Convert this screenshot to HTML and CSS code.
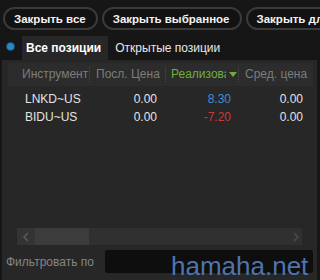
FILE: index.html
```html
<!DOCTYPE html>
<html lang="ru">
<head>
<meta charset="utf-8">
<link rel="stylesheet" href="styles.css">
</head>
<body>
<div class="toolbar">
  <button class="pill">Закрыть все</button>
  <button class="pill">Закрыть выбранное</button>
  <button class="pill">Закрыть для символа</button>
</div>
<div class="tabs">
  <span class="radio"></span>
  <span class="tab active">Все позиции</span>
  <span class="tab">Открытые позиции</span>
</div>
<div class="panel">
  <div class="grid">
    <div class="row head">
      <div class="c c1">Инструмент</div>
      <div class="c c2">Посл. Цена</div>
      <div class="c c3 sorted"><span class="trunc">Реализова</span><span class="tri"></span></div>
      <div class="c c4">Сред. цена</div>
    </div>
    <div class="row">
      <div class="c c1">LNKD~US</div>
      <div class="c c2 num">0.00</div>
      <div class="c c3 num pos">8.30</div>
      <div class="c c4 num">0.00</div>
    </div>
    <div class="row">
      <div class="c c1">BIDU~US</div>
      <div class="c c2 num">0.00</div>
      <div class="c c3 num neg">-7.20</div>
      <div class="c c4 num">0.00</div>
    </div>
  </div>
  <div class="hscroll">
    <span class="arrow"><svg width="8" height="10" viewBox="0 0 8 10"><path d="M6 1 L2 5 L6 9" fill="none" stroke="#5a5a5a" stroke-width="1.5"/></svg></span>
    <span class="thumb"></span>
    <span class="track"></span>
    <span class="arrow"><svg width="8" height="10" viewBox="0 0 8 10"><path d="M2 1 L6 5 L2 9" fill="none" stroke="#4a4a4a" stroke-width="1.5"/></svg></span>
  </div>
  <div class="filter">
    <span class="flabel">Фильтровать по</span>
    <span class="finput"></span>
  </div>
</div>
<div class="watermark">hamaha.net</div>
</body>
</html>
```
FILE: styles.css
```css
* { box-sizing: border-box; }
html, body { margin: 0; padding: 0; }
body {
  width: 320px;
  height: 280px;
  overflow: hidden;
  background: #161616;
  font-family: "Liberation Sans", Arial, sans-serif;
  position: relative;
}
.toolbar {
  display: flex;
  gap: 4px;
  padding: 7px 0 0 3px;
  white-space: nowrap;
  overflow: hidden;
}
.pill {
  flex: none;
  height: 23px;
  padding: 0 10px 0 9px;
  border: 2px solid #3a3a3a;
  border-radius: 12px;
  background: #121212;
  color: #f2f2f2;
  font-family: "Liberation Sans", Arial, sans-serif;
  font-weight: 700;
  font-size: 11.5px;
  line-height: 18px;
}
.tabs {
  display: flex;
  align-items: stretch;
  height: 24px;
  margin-top: 6px;
}
.radio {
  width: 7px;
  height: 7px;
  border-radius: 50%;
  background: #2a88c8;
  box-shadow: 0 0 0 1px #1c4a6a;
  margin: 7px 8px 0 7px;
}
.tab {
  display: flex;
  align-items: center;
  padding: 0 6px 0 7px;
  color: #e8e8e8;
  font-size: 12px;
}
.tab.active {
  background: #272727;
  font-weight: 700;
  color: #ffffff;
  padding: 0 7px 0 4px;
}
.panel {
  margin-left: 2px;
  width: 315px;
  height: 220px;
  background: #272727;
  padding-top: 3px;
  display: flex;
  flex-direction: column;
}
.grid {
  margin-left: 6px;
  width: 305px;
  height: 162px;
}
.row {
  display: grid;
  grid-template-columns: 81px 76px 73px 75px;
  height: 18px;
  align-items: center;
  font-size: 12px;
  color: #e4e4e4;
}
.row.head {
  height: 23px;
  background: #2c2c2c;
  color: #7c7c7c;
  margin-bottom: 4px;
  font-size: 12px;
}
.c {
  white-space: nowrap;
  overflow: hidden;
  padding-left: 6px;
}
.c1 { padding-left: 17px; }
.head .c1 { padding-left: 14px; }
.head .c2, .head .c3, .head .c4 {
  border-left: 1px dotted #4a4a4a;
}
.head .c { line-height: 15px; }
.num { text-align: right; padding-right: 8px; }
.c3.num { padding-right: 7px; }
.c4.num { padding-right: 10px; }
.sorted {
  display: flex;
  align-items: center;
  color: #6fae3a;
  padding-left: 5px;
}
.trunc {
  width: 55px;
  overflow: hidden;
  display: inline-block;
}
.tri {
  width: 0;
  height: 0;
  border-left: 4px solid transparent;
  border-right: 4px solid transparent;
  border-top: 5px solid #6fae3a;
  margin-left: 3px;
}
.pos { color: #3a8fd8; }
.neg { color: #c83a3a; }
.hscroll {
  margin: 3px 0 0 15px;
  width: 285px;
  height: 17px;
  display: flex;
  background: #303030;
}
.arrow {
  width: 18px;
  display: flex;
  align-items: center;
  justify-content: center;
  background: #343434;
}
.thumb {
  width: 54px;
  background: #3c3c3c;
}
.track { flex: 1; }
.hscroll .arrow:last-child { width: 12px; background: #303030; }
.filter {
  display: flex;
  align-items: center;
  height: 23px;
  margin-top: 5px;
}
.flabel {
  color: #858585;
  font-size: 12px;
  padding-left: 4px;
  width: 103px;
  white-space: nowrap;
}
.finput {
  width: 208px;
  height: 23px;
  background: #0e0e0e;
  border-radius: 3px;
}
.watermark {
  position: absolute;
  left: 171px;
  top: 251px;
  font-family: "Liberation Sans", Arial, sans-serif;
  font-size: 26px;
  line-height: 30px;
  color: #4e74ad;
}
```
